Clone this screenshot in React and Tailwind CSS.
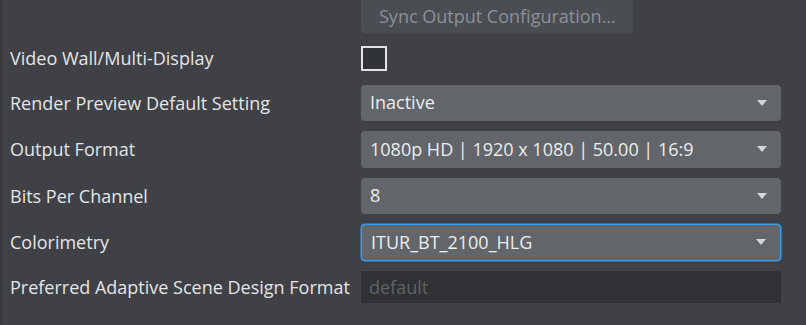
import React from "react";

function Arrow() {
  return (
    <svg width="10" height="7" viewBox="0 0 10 7" className="shrink-0">
      <polygon points="0,0 10,0 5,6" fill="#d4d5d6" />
    </svg>
  );
}

function Select({ value, focused, h }) {
  return (
    <div
      className={
        "flex w-[420px] items-center justify-between rounded-[4px] bg-[#626569] pl-[9px] pr-[14px] text-[18px] leading-none text-[#eceded] " +
        h +
        (focused ? " border border-[#3a9ceb] shadow-[0_0_0_0.5px_#3a9ceb]" : "")
      }
    >
      <span className="pb-[2px]">{value}</span>
      <Arrow />
    </div>
  );
}

function Row({ label, children, className = "" }) {
  return (
    <div className={"flex items-center " + className}>
      <div className="w-[351px] shrink-0 pb-[1px] text-[18px] leading-none text-[#e4e5e6]">{label}</div>
      {children}
    </div>
  );
}

export default function App() {
  return (
    <div
      className="relative h-[325px] w-[806px] overflow-hidden bg-[#3f4146] pl-[10px]"
      style={{ fontFamily: '"Open Sans", "Noto Sans", sans-serif' }}
    >
      <div className="absolute left-0 top-0 h-full w-[2px] bg-[#37393d]" />
      <div className="flex flex-col">
        <Row label="">
          <div className="flex h-[33px] w-[272px] items-center rounded-b-[4px] bg-[#4a4d52] pb-[2px] pl-[18px] text-[18px] leading-none text-[#8b9197]">
            Sync Output Configuration...
          </div>
        </Row>
        <Row label="Video Wall/Multi-Display" className="mt-[13px] h-[25px]">
          <div className="h-[25px] w-[26px] border-2 border-[#e2e2e2] bg-[#2f3237]" />
        </Row>
        <Row label="Render Preview Default Setting" className="mt-[14px]">
          <Select value="Inactive" h="h-[36px]" />
        </Row>
        <Row label="Output Format" className="mt-[10px]">
          <Select value="1080p HD | 1920 x 1080 | 50.00 | 16:9" h="h-[37px]" />
        </Row>
        <Row label="Bits Per Channel" className="mt-[10px]">
          <Select value="8" h="h-[36px]" />
        </Row>
        <Row label="Colorimetry" className="mt-[10px]">
          <Select value="ITUR_BT_2100_HLG" focused h="h-[37px]" />
        </Row>
        <Row label="Preferred Adaptive Scene Design Format" className="mt-[10px]">
          <div className="flex h-[32px] w-[420px] items-center bg-[#2f3135] pb-[1px] pl-[8px] text-[18px] leading-none text-[#5f6368]">
            default
          </div>
        </Row>
      </div>
    </div>
  );
}
